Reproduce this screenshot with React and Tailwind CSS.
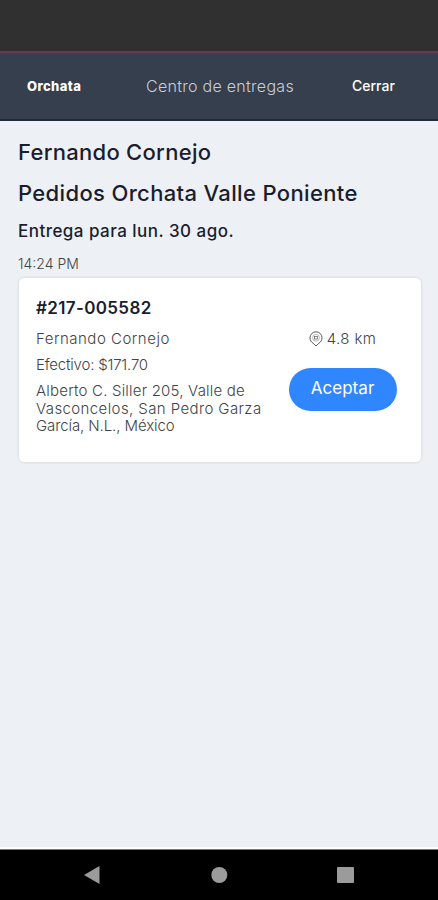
const ORDERS = [
  {
    id: "217-005582",
    time: "14:24 PM",
    customer: "Fernando Cornejo",
    payment: "Efectivo: $171.70",
    address: [
      { text: "Alberto C. Siller 205, Valle de", tracking: "tracking-[0.2px]" },
      { text: "Vasconcelos, San Pedro Garza", tracking: "tracking-[0.4px]" },
      { text: "García, N.L., México", tracking: "tracking-[-0.1px]" },
    ],
    distance: "4.8 km",
  },
];

function PinIcon() {
  return (
    <svg width="14" height="16" viewBox="0 0 14 16" fill="none" stroke="#55575b" strokeWidth="1">
      <path d="M7 15 4.200 12.300C2 11 1 9 1 6.800a6 6 0 0 1 12 0c0 2.200-1 4.200-3.200 5.500Z" />
      <circle cx="7" cy="6.700" r="3.400" strokeWidth="0.400" />
      <rect x="5.500" y="5.500" width="3" height="2.500" strokeWidth="0.700" />
    </svg>
  );
}

function Header() {
  return (
    <header className="h-[70px] shrink-0 bg-[#363f4d] border-t-2 border-t-[#653b50] border-b-2 border-b-[#222b38] flex items-center text-white">
      <div className="w-[119px] pl-[27px] text-[13px] leading-5 font-extrabold tracking-[0.4px]">
        Orchata
      </div>
      <div className="w-[206px] pl-[27px] text-[16px] leading-5 font-light tracking-[0.28px] text-[#c9ced6] whitespace-nowrap">
        Centro de entregas
      </div>
      <button className="pl-[27px] text-[14px] leading-5 font-medium">Cerrar</button>
    </header>
  );
}

function OrderCard({ order }) {
  return (
    <article className="w-[404px] h-[186px] bg-white border border-[#e2e4e7] rounded-md flex shadow-[0_0_1px_1px_rgba(0,0,0,0.03)] text-[#414347]">
      <div className="w-[252px] pl-[17px] pt-[19px] whitespace-nowrap">
        <h4 className="text-[17px] leading-[22px] font-semibold tracking-[0.35px] text-[#1b1d2e]">
          #{order.id}
        </h4>
        <p className="mt-[11px] text-[15px] leading-[18px] font-light tracking-[0.5px]">
          {order.customer}
        </p>
        <p className="mt-2 text-[15px] leading-[18px] font-light tracking-[-0.2px]">
          {order.payment}
        </p>
        <div className="mt-2 text-[15px] leading-[17.600px] font-light">
          {order.address.map((line) => (
            <p key={line.text} className={line.tracking}>
              {line.text}
            </p>
          ))}
        </div>
      </div>
      <div className="w-[143px] pt-[52px] flex flex-col items-center">
        <div className="flex items-center gap-1 h-[18px]">
          <PinIcon />
          <span className="text-[15px] leading-[18px] font-light tracking-[0.35px] whitespace-nowrap">
            {order.distance}
          </span>
        </div>
        <button className="mt-5 pb-[2px] w-[108px] h-[43px] rounded-full bg-[#2f86ff] text-white text-[17px] tracking-[0.05px]">
          Aceptar
        </button>
      </div>
    </article>
  );
}

function SystemNav() {
  return (
    <nav className="h-[51px] shrink-0 bg-black border-t border-[#777b7e]">
      <svg className="block" width="438" height="50" viewBox="0 0 438 50" fill="#9b9b9b">
        <path d="M84 25 99.500 16V34Z" />
        <circle cx="219.300" cy="25" r="8" />
        <rect x="337" y="17" width="17" height="16" rx="1" />
      </svg>
    </nav>
  );
}

export default function App() {
  return (
    <div className="w-[438px] h-[900px] flex flex-col overflow-hidden bg-[#edf1f5] font-['Inter',sans-serif] text-[#1b1d2e]">
      <div className="h-[51px] shrink-0 bg-[#303030]" />
      <Header />
      <main className="flex-1 px-[18px] pt-[17px] border-b-2 border-white whitespace-nowrap">
        <h1 className="text-[22px] leading-[28px] font-medium tracking-[0.28px]">Fernando Cornejo</h1>
        <h2 className="mt-[13px] text-[22px] leading-[28px] font-medium tracking-[0.35px]">
          Pedidos Orchata Valle Poniente
        </h2>
        <h3 className="mt-[13px] text-[17px] leading-[22px] font-medium tracking-[0.47px]">
          Entrega para lun. 30 ago.
        </h3>
        {ORDERS.map((order) => (
          <section key={order.id}>
            <p className="mt-[13px] mb-1 text-[14px] leading-[18px] font-light text-[#414347]">
              {order.time}
            </p>
            <OrderCard order={order} />
          </section>
        ))}
      </main>
      <SystemNav />
    </div>
  );
}
